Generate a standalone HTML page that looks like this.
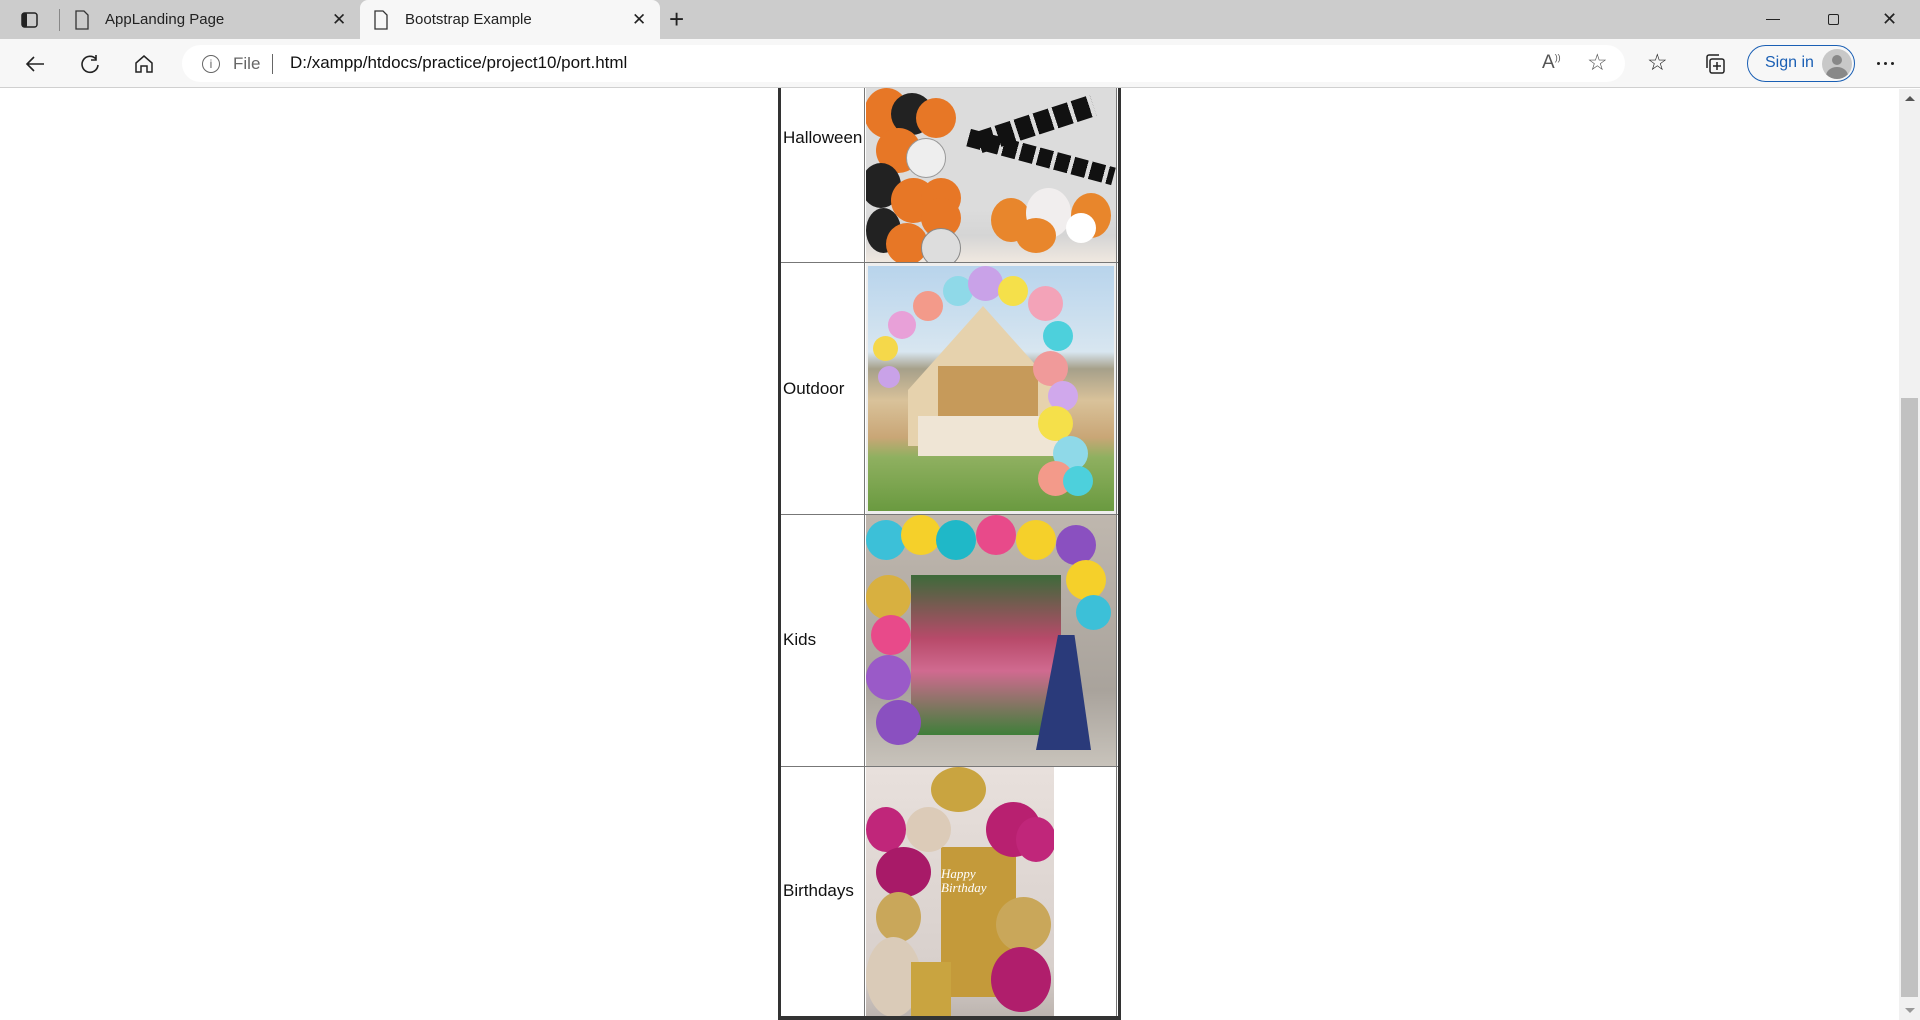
<!DOCTYPE html>
<html><head><meta charset="utf-8"><style>
*{margin:0;padding:0;box-sizing:border-box}
body{width:1920px;height:1020px;overflow:hidden;background:#fff;font-family:"Liberation Sans",Arial,sans-serif;position:relative}
.abs{position:absolute}
.tabbar{left:0;top:0;width:1920px;height:39px;background:#cccccc}
.tab{top:0;height:39px;font-size:15px;color:#222;line-height:39px}
.toolbar{left:0;top:39px;width:1920px;height:49px;background:#f7f7f7;border-bottom:1px solid #d0d0d0}
.addr{left:182px;top:45px;width:1443px;height:37px;background:#fff;border-radius:19px}
.lbl{font-size:17px;color:#111;left:783px}
.b{border-radius:50%}
</style></head><body>
<div class="abs tabbar"></div>
<svg class="abs" style="left:20px;top:10px" width="20" height="20" viewBox="0 0 20 20"><rect x="2" y="3" width="15" height="14" rx="2.5" fill="none" stroke="#222" stroke-width="1.5"/><rect x="2" y="3" width="5" height="14" rx="1.5" fill="#222"/></svg>
<div class="abs" style="left:59px;top:9px;width:1px;height:22px;background:#888"></div>
<svg class="abs" style="left:74px;top:10px" width="16" height="20" viewBox="0 0 16 20"><path d="M2 1h8l4 4v14H2z" fill="none" stroke="#333" stroke-width="1.3"/></svg>
<div class="abs tab" style="left:105px">AppLanding Page</div>
<div class="abs tab" style="left:332px;font-size:17px">✕</div>
<div class="abs" style="left:360px;top:0;width:300px;height:39px;background:#f7f7f7;border-radius:8px 8px 0 0"></div>
<svg class="abs" style="left:373px;top:10px" width="16" height="20" viewBox="0 0 16 20"><path d="M2 1h8l4 4v14H2z" fill="none" stroke="#333" stroke-width="1.3"/></svg>
<div class="abs tab" style="left:405px">Bootstrap Example</div>
<div class="abs tab" style="left:632px;font-size:17px">✕</div>
<div class="abs tab" style="left:669px;font-size:26px;font-weight:300">+</div>
<div class="abs" style="left:1766px;top:19px;width:14px;height:1px;background:#222"></div>
<div class="abs" style="left:1828px;top:14px;width:11px;height:11px;border:1.3px solid #222;border-radius:2px"></div>
<div class="abs tab" style="left:1882px;font-size:18px">✕</div>
<div class="abs toolbar"></div>
<div class="abs addr"></div>
<svg class="abs" style="left:24px;top:53px" width="22" height="22" viewBox="0 0 22 22"><path d="M20 11H3M10 4l-7 7 7 7" fill="none" stroke="#222" stroke-width="1.6"/></svg>
<svg class="abs" style="left:79px;top:53px" width="22" height="22" viewBox="0 0 22 22"><path d="M17 6A8 8 0 1 0 19 12M17 2v5h-5" fill="none" stroke="#222" stroke-width="1.6"/></svg>
<svg class="abs" style="left:133px;top:53px" width="22" height="22" viewBox="0 0 22 22"><path d="M3 10L11 3l8 7v9h-5v-6H8v6H3z" fill="none" stroke="#222" stroke-width="1.5"/></svg>
<div class="abs" style="left:202px;top:55px;width:18px;height:18px;border:1.3px solid #666;border-radius:50%;font-size:12px;text-align:center;line-height:16px;color:#666">i</div>
<div class="abs" style="left:233px;top:54px;font-size:17px;color:#666">File</div>
<div class="abs" style="left:272px;top:54px;width:1px;height:20px;background:#666"></div>
<div class="abs" style="left:290px;top:53px;font-size:17px;color:#111">D:/xampp/htdocs/practice/project10/port.html</div>
<div class="abs" style="left:1542px;top:52px;font-size:19px;color:#555">A<sup style="font-size:9px">))</sup></div>
<div class="abs" style="left:1587px;top:49px;font-size:23px;color:#555">☆</div>
<div class="abs" style="left:1647px;top:49px;font-size:23px;color:#222">☆</div>
<svg class="abs" style="left:1704px;top:52px" width="24" height="24" viewBox="0 0 24 24"><rect x="6" y="7" width="14" height="14" rx="2" fill="none" stroke="#222" stroke-width="1.5"/><path d="M3 16V5a2 2 0 0 1 2-2h10M13 10v8M9 14h8" fill="none" stroke="#222" stroke-width="1.5"/></svg>
<div class="abs" style="left:1747px;top:45px;width:108px;height:37px;border:1.5px solid #1a5fb4;border-radius:19px"></div>
<div class="abs" style="left:1765px;top:54px;font-size:16px;color:#1a5fb4">Sign in</div>
<div class="abs b" style="left:1822px;top:49px;width:30px;height:30px;background:#c8c8c8;overflow:hidden"><div class="abs b" style="left:10px;top:6px;width:10px;height:10px;background:#888"></div><div class="abs b" style="left:4px;top:18px;width:22px;height:18px;background:#888"></div></div>
<div class="abs" style="left:1877px;top:62px;width:3px;height:3px;background:#222;border-radius:50%;box-shadow:7px 0 #222,14px 0 #222"></div>

<div class="abs" style="left:778px;top:88px;width:343px;height:932px;border:3px solid #333;border-top:none;border-bottom:none"></div>
<div class="abs" style="left:778px;top:1016px;width:343px;height:4px;background:#333"></div>
<div class="abs" style="left:781px;top:262px;width:337px;height:1px;background:#777"></div>
<div class="abs" style="left:781px;top:514px;width:337px;height:1px;background:#777"></div>
<div class="abs" style="left:781px;top:766px;width:337px;height:1px;background:#777"></div>
<div class="abs" style="left:864px;top:88px;width:1px;height:928px;background:#777"></div>
<div class="abs" style="left:1116px;top:88px;width:1px;height:928px;background:#777"></div>

<div class="abs lbl" style="top:128px">Halloween</div>
<div class="abs lbl" style="top:379px">Outdoor</div>
<div class="abs lbl" style="top:630px">Kids</div>
<div class="abs lbl" style="top:881px">Birthdays</div>

<div class="abs" style="left:866px;top:88px;width:250px;height:174px;background:linear-gradient(#dcdcdc 70%,#d5d5d5 85%,#efe8e0);overflow:hidden">
 <div class="abs b" style="left:-2px;top:0;width:45px;height:50px;background:#e77726"></div>
 <div class="abs b" style="left:25px;top:5px;width:42px;height:42px;background:#222"></div>
 <div class="abs b" style="left:50px;top:10px;width:40px;height:40px;background:#e77726"></div>
 <div class="abs b" style="left:10px;top:40px;width:45px;height:45px;background:#e77726"></div>
 <div class="abs b" style="left:40px;top:50px;width:40px;height:40px;background:#eee;border:1px solid #999"></div>
 <div class="abs b" style="left:-5px;top:75px;width:40px;height:45px;background:#222"></div>
 <div class="abs b" style="left:25px;top:90px;width:45px;height:45px;background:#e77726"></div>
 <div class="abs b" style="left:55px;top:90px;width:40px;height:40px;background:#e77726"></div>
 <div class="abs b" style="left:55px;top:110px;width:40px;height:40px;background:#e77726"></div>
 <div class="abs b" style="left:0;top:120px;width:35px;height:45px;background:#222"></div>
 <div class="abs b" style="left:20px;top:135px;width:42px;height:42px;background:#e77726"></div>
 <div class="abs b" style="left:55px;top:140px;width:40px;height:40px;background:#ddd;border:1px solid #888"></div>
 <div class="abs" style="left:110px;top:25px;width:120px;height:22px;transform:rotate(-18deg);background:repeating-linear-gradient(90deg,#111 0 16px,transparent 16px 20px)"></div>
 <div class="abs" style="left:100px;top:60px;width:150px;height:18px;transform:rotate(15deg);background:repeating-linear-gradient(90deg,#111 0 14px,transparent 14px 18px)"></div>
 <div class="abs b" style="left:125px;top:110px;width:40px;height:44px;background:#e8862c"></div>
 <div class="abs b" style="left:160px;top:100px;width:45px;height:50px;background:#f1eeee"></div>
 <div class="abs b" style="left:205px;top:105px;width:40px;height:45px;background:#e8862c"></div>
 <div class="abs b" style="left:150px;top:130px;width:40px;height:35px;background:#e8862c"></div>
 <div class="abs b" style="left:200px;top:125px;width:30px;height:30px;background:#fff"></div>
</div>

<div class="abs" style="left:866px;top:263px;width:250px;height:251px;background:#eee"></div>
<div class="abs" style="left:868px;top:266px;width:246px;height:245px;background:linear-gradient(#b8d4ec,#d8e6f0 35%,#a6a08a 42%,#d9c29a 55%,#c9a676 70%,#8fb060 78%,#6a9a40);overflow:hidden">
 <div class="abs" style="left:40px;top:40px;width:150px;height:140px;background:#e6d2ad;clip-path:polygon(50% 0,100% 60%,100% 100%,0 100%,0 60%)"></div>
 <div class="abs" style="left:70px;top:100px;width:100px;height:60px;background:#c69a5a"></div>
 <div class="abs" style="left:50px;top:150px;width:140px;height:40px;background:#efe5d5"></div>
 <div class="abs b" style="left:5px;top:70px;width:25px;height:25px;background:#f5d84a"></div>
 <div class="abs b" style="left:20px;top:45px;width:28px;height:28px;background:#e8a0d8"></div>
 <div class="abs b" style="left:45px;top:25px;width:30px;height:30px;background:#f39a8a"></div>
 <div class="abs b" style="left:75px;top:10px;width:30px;height:30px;background:#8fd9e8"></div>
 <div class="abs b" style="left:100px;top:0;width:35px;height:35px;background:#c9a2e8"></div>
 <div class="abs b" style="left:130px;top:10px;width:30px;height:30px;background:#f5e04a"></div>
 <div class="abs b" style="left:160px;top:20px;width:35px;height:35px;background:#f3a3b8"></div>
 <div class="abs b" style="left:175px;top:55px;width:30px;height:30px;background:#4dd0dc"></div>
 <div class="abs b" style="left:165px;top:85px;width:35px;height:35px;background:#f09a9a"></div>
 <div class="abs b" style="left:180px;top:115px;width:30px;height:30px;background:#d0a8ec"></div>
 <div class="abs b" style="left:170px;top:140px;width:35px;height:35px;background:#f5e04a"></div>
 <div class="abs b" style="left:185px;top:170px;width:35px;height:35px;background:#8fd9e8"></div>
 <div class="abs b" style="left:170px;top:195px;width:35px;height:35px;background:#f39a8a"></div>
 <div class="abs b" style="left:195px;top:200px;width:30px;height:30px;background:#4dd0dc"></div>
 <div class="abs b" style="left:10px;top:100px;width:22px;height:22px;background:#c9a2e8"></div>
</div>

<div class="abs" style="left:866px;top:515px;width:250px;height:251px;background:linear-gradient(#bfb7ae,#a9a39c 70%,#c8c3bb);overflow:hidden">
 <div class="abs" style="left:45px;top:60px;width:150px;height:160px;background:linear-gradient(#3d6a3a,#b84a6a 40%,#d06a90 60%,#3f7f3a)"></div>
 <div class="abs b" style="left:0;top:5px;width:40px;height:40px;background:#3cc0d8"></div>
 <div class="abs b" style="left:35px;top:0;width:40px;height:40px;background:#f5d02a"></div>
 <div class="abs b" style="left:70px;top:5px;width:40px;height:40px;background:#1fb8c8"></div>
 <div class="abs b" style="left:110px;top:0;width:40px;height:40px;background:#e84a8a"></div>
 <div class="abs b" style="left:150px;top:5px;width:40px;height:40px;background:#f5d02a"></div>
 <div class="abs b" style="left:190px;top:10px;width:40px;height:40px;background:#8a50c0"></div>
 <div class="abs b" style="left:200px;top:45px;width:40px;height:40px;background:#f5d02a"></div>
 <div class="abs b" style="left:210px;top:80px;width:35px;height:35px;background:#3cc0d8"></div>
 <div class="abs b" style="left:0;top:60px;width:45px;height:45px;background:#d8b040"></div>
 <div class="abs b" style="left:5px;top:100px;width:40px;height:40px;background:#e84a8a"></div>
 <div class="abs b" style="left:0;top:140px;width:45px;height:45px;background:#9a5ac8"></div>
 <div class="abs b" style="left:10px;top:185px;width:45px;height:45px;background:#8a50c0"></div>
 <div class="abs" style="left:170px;top:120px;width:55px;height:115px;background:#2a3a7a;clip-path:polygon(40% 0,70% 0,100% 100%,0 100%)"></div>
</div>

<div class="abs" style="left:866px;top:767px;width:188px;height:249px;background:linear-gradient(#e8e0dc,#d8d0cc 80%,#bdb5b0);overflow:hidden">
 <div class="abs" style="left:75px;top:80px;width:75px;height:150px;background:#c49a3a"></div>
 <div class="abs b" style="left:65px;top:0;width:55px;height:45px;background:#c9a440"></div>
 <div class="abs b" style="left:40px;top:40px;width:45px;height:45px;background:#dccbb8"></div>
 <div class="abs b" style="left:0;top:40px;width:40px;height:45px;background:#c0267a"></div>
 <div class="abs b" style="left:120px;top:35px;width:55px;height:55px;background:#b82070"></div>
 <div class="abs b" style="left:150px;top:50px;width:40px;height:45px;background:#c0267a"></div>
 <div class="abs b" style="left:10px;top:80px;width:55px;height:50px;background:#a81a68"></div>
 <div class="abs b" style="left:10px;top:125px;width:45px;height:50px;background:#c9a75a"></div>
 <div class="abs b" style="left:0;top:170px;width:55px;height:80px;background:#dacbb8"></div>
 <div class="abs b" style="left:130px;top:130px;width:55px;height:55px;background:#c9a75a"></div>
 <div class="abs b" style="left:125px;top:180px;width:60px;height:65px;background:#b01e6c"></div>
 <div class="abs" style="left:45px;top:195px;width:40px;height:60px;background:#c9a440"></div>
 <div class="abs" style="left:75px;top:100px;width:60px;height:40px;font:italic 13px 'Liberation Serif',serif;color:#fff;line-height:14px">Happy<br>Birthday</div>
</div>

<div class="abs" style="left:1899px;top:89px;width:21px;height:931px;background:#f1f1f1"></div>
<div class="abs" style="left:1901px;top:398px;width:17px;height:599px;background:#c1c1c1"></div>
<div class="abs" style="left:1905px;top:96px;width:0;height:0;border-left:5px solid transparent;border-right:5px solid transparent;border-bottom:5px solid #555"></div>
<div class="abs" style="left:1905px;top:1008px;width:0;height:0;border-left:5px solid transparent;border-right:5px solid transparent;border-top:5px solid #999"></div>
</body></html>
